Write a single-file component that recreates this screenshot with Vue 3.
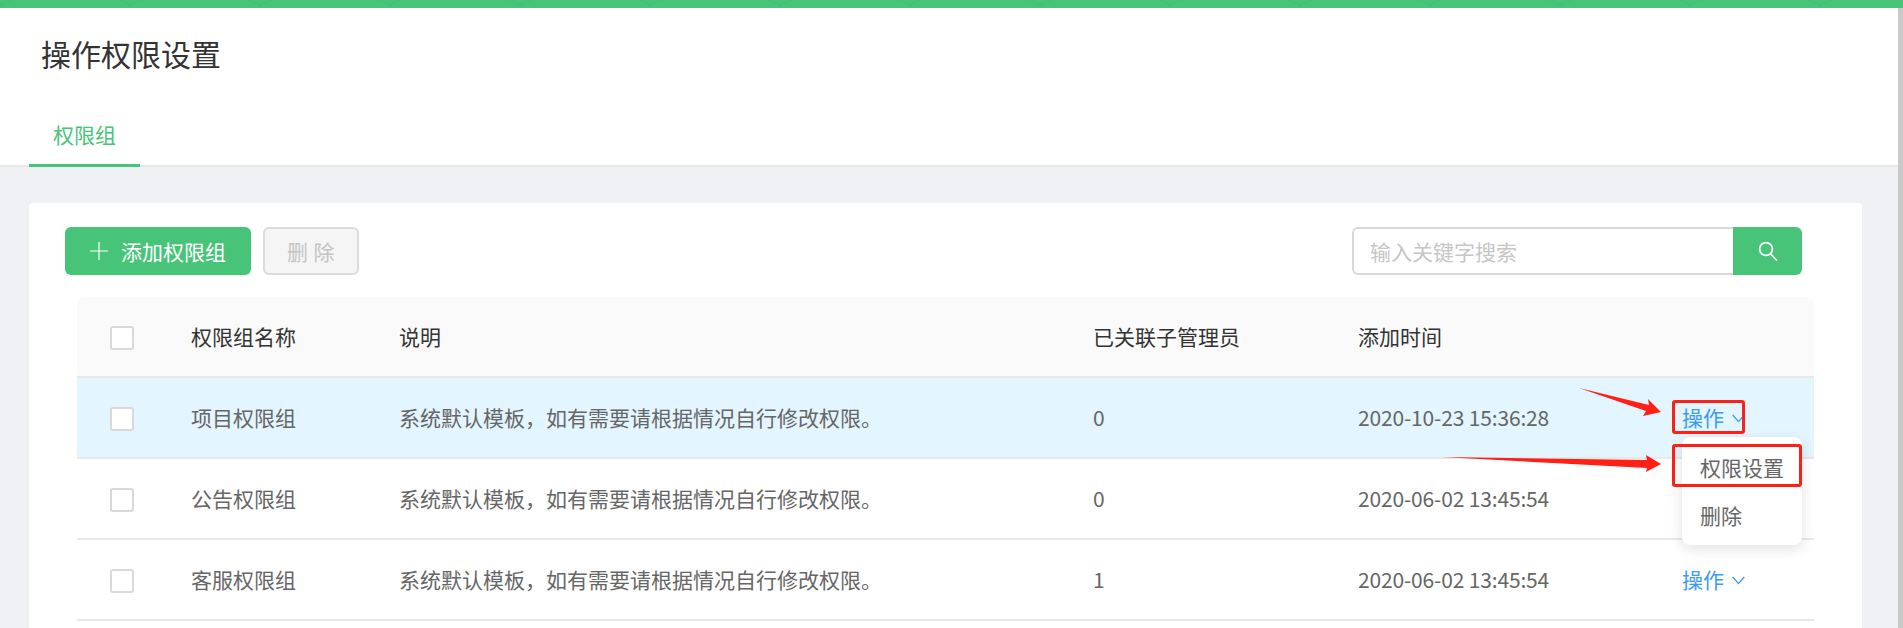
<script setup>
const rows = [
  { name: '项目权限组', count: 0, time: '2020-10-23 15:36:28', active: true },
  { name: '公告权限组', count: 0, time: '2020-06-02 13:45:54' },
  { name: '客服权限组', count: 1, time: '2020-06-02 13:45:54' }
]
const desc = '系统默认模板\uFF0C如有需要请根据情况自行修改权限。'
</script>

<template>
  <div class="page">
    <div class="topbar"></div>
    <header class="head">
      <h1 class="title">操作权限设置</h1>
      <div class="tabs"><span class="tab">权限组</span></div>
    </header>
    <main class="main">
      <section class="card">
        <div class="toolbar">
          <button class="btn primary">
            <svg class="plus" viewBox="0 0 18 18"><path d="M9 0v18M0 9h18" stroke="#fff" stroke-width="1.2" fill="none" /></svg>
            添加权限组
          </button>
          <button class="btn disabled">删 除</button>
          <div class="search">
            <div class="search-input">输入关键字搜索</div>
            <div class="search-btn">
              <svg width="20" height="21" viewBox="0 0 20 21" fill="none" stroke="#fff" stroke-width="1.7"><circle cx="8" cy="8" r="6.4" /><path d="M12.6 12.8l6.4 7" /></svg>
            </div>
          </div>
        </div>
        <div class="table">
          <div class="row header">
            <div class="cell"><span class="check"></span></div>
            <div class="cell">权限组名称</div>
            <div class="cell">说明</div>
            <div class="cell">已关联子管理员</div>
            <div class="cell">添加时间</div>
            <div class="cell"></div>
          </div>
          <div v-for="r in rows" :key="r.name" class="row" :class="{ active: r.active }">
            <div class="cell"><span class="check"></span></div>
            <div class="cell">{{ r.name }}</div>
            <div class="cell">{{ desc }}</div>
            <div class="cell">{{ r.count }}</div>
            <div class="cell time">{{ r.time }}</div>
            <div class="cell op">
              操作
              <svg class="chev" width="13" height="9" viewBox="0 0 13 9" fill="none" stroke="#3a9bf4" stroke-width="1.3"><path d="M.7 1l5.8 6.6L12.3 1" /></svg>
            </div>
          </div>
          <div class="menu">
            <div class="item">权限设置</div>
            <div class="item">删除</div>
          </div>
        </div>
      </section>
    </main>
    <div class="scrollbar"></div>
    <div class="mark mark-op"></div>
    <div class="mark mark-item"></div>
    <svg class="arrows" width="1903" height="628" viewBox="0 0 1903 628">
      <path d="M1579 388L1649 405L1648 399L1661 412L1643 416L1646 411Z" fill="#ff2015" />
      <path d="M1442 457L1647 460L1646 455L1661 464L1646 472L1647 468Z" fill="#ff2015" />
    </svg>
  </div>
</template>

<style>
html, body { margin: 0; height: 100%; overflow: hidden; }
</style>

<style scoped>
.page {
  position: relative;
  width: 1903px;
  height: 628px;
  overflow: hidden;
  background: #f0f1f5;
  font-family: "Noto Sans CJK SC", "Liberation Sans", sans-serif;
  font-size: 21px;
  color: #666;
}
.topbar {
  height: 8px;
  background-color: #48c479;
  background-image: radial-gradient(ellipse 70px 14px at 50% 100%, transparent 90%, rgba(60, 170, 105, .22) 95%, transparent 100%);
  background-size: 130px 8px;
}
.head {
  background: #fff;
  height: 159px;
  box-sizing: border-box;
  padding: 0 0 0 29px;
  border-bottom: 2px solid #e8e8e8;
  display: flex;
  flex-direction: column;
}
.title {
  margin: 24px 0 0 12px;
  font-size: 30px;
  line-height: 42px;
  font-weight: 400;
  color: #333;
}
.tabs { margin-top: auto; }
.tab {
  display: block;
  width: 111px;
  height: 52px;
  margin-bottom: -2px;
  box-sizing: border-box;
  padding-top: 4px;
  text-align: center;
  line-height: 30px;
  color: #48c479;
  border-bottom: 3px solid #48c479;
}
.main { padding: 36px 35px 0 29px; }
.card {
  width: 1833px;
  height: 440px;
  background: #fff;
  border-radius: 4px;
  padding: 24px 60px 0 36px;
  box-sizing: border-box;
}
.toolbar { display: flex; align-items: center; gap: 12px; height: 48px; }
.btn {
  height: 48px;
  border-radius: 6px;
  font: inherit;
  padding: 0;
  box-sizing: border-box;
  border: 0;
}
.primary {
  width: 186px;
  background: #48c479;
  color: #fff;
  display: flex;
  align-items: center;
  justify-content: center;
  gap: 13px;
  box-shadow: 0 2px 0 rgba(0, 0, 0, .03);
}
.plus { width: 18px; height: 18px; }
.disabled {
  width: 96px;
  background: #f5f5f5;
  color: #c4c4c4;
  border: 2px solid #dcdcdc;
  letter-spacing: .5px;
}
.search { display: flex; margin-left: auto; width: 450px; height: 48px; }
.search-input {
  flex: 1;
  box-sizing: border-box;
  border: 2px solid #d9d9d9;
  border-right: 0;
  border-radius: 6px 0 0 6px;
  padding-left: 16px;
  line-height: 44px;
  color: #c6c6c6;
}
.search-btn {
  width: 69px;
  background: #48c479;
  border-radius: 0 6px 6px 0;
  display: flex;
  align-items: center;
  justify-content: center;
}
.table { position: relative; margin: 22px 0 0 12px; width: 1737px; }
.row {
  display: grid;
  grid-template-columns: 114px 208px 694px 265px 324px 132px;
  height: 81px;
  box-sizing: border-box;
  border-bottom: 2px solid #e8e8e8;
}
.header { background: #fafafa; color: #333; border-radius: 8px 8px 0 0; }
.active { background: #e3f5ff; }
.cell { display: flex; align-items: center; line-height: 30px; padding-bottom: 2px; }
.cell:first-child { padding: 3px 0 0 33px; }
.time { letter-spacing: -.16px; }
.check {
  width: 24px;
  height: 24px;
  box-sizing: border-box;
  background: #fff;
  border: 2px solid #d9d9d9;
  border-radius: 3px;
}
.op { color: #3a9bf4; gap: 8px; }
.chev { margin-top: 4px; }
.menu {
  position: absolute;
  left: 1605px;
  top: 140px;
  width: 120px;
  height: 108px;
  padding-top: 6px;
  box-sizing: border-box;
  background: #fff;
  border-radius: 8px;
  box-shadow: 0 4px 14px rgba(0, 0, 0, .12);
}
.item { height: 48px; line-height: 48px; padding-left: 18px; }
.mark {
  position: absolute;
  box-sizing: border-box;
  border: 3px solid #ff2015;
  border-radius: 3px;
}
.mark-op { left: 1672px; top: 400px; width: 73px; height: 34px; }
.mark-item { left: 1672px; top: 444px; width: 130px; height: 43px; }
.arrows { position: absolute; left: 0; top: 0; pointer-events: none; }
.scrollbar { position: absolute; right: 0; top: 8px; bottom: 0; width: 5px; background: #c9c9c9; }
</style>
